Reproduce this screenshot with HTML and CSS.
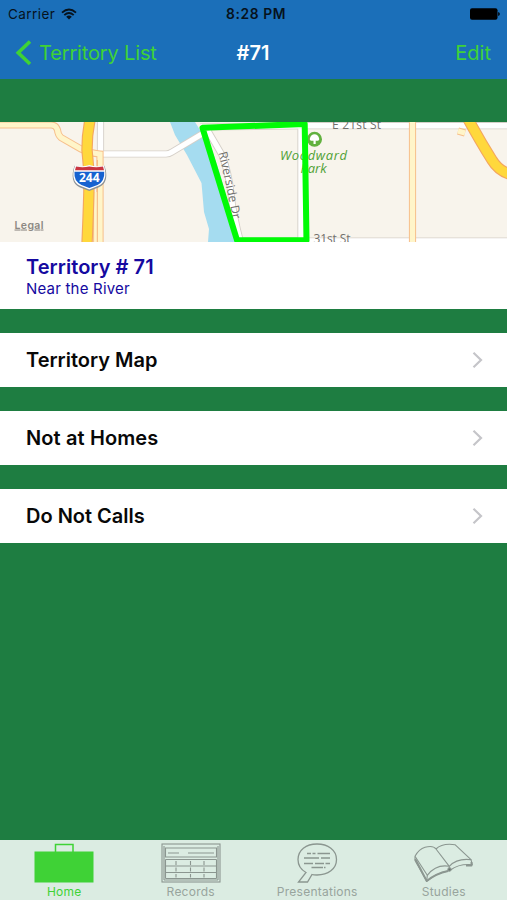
FILE: index.html
```html
<!DOCTYPE html>
<html lang="en">
<head>
    <meta charset="UTF-8">
    <meta name="viewport" content="width=device-width, initial-scale=1.0">
    <title>#71</title>
    <link rel="stylesheet" href="styles.css">
</head>
<body>
    <div class="screen">
        <header class="top">
            <div class="status-bar">
                <div class="carrier">
                    <span>Carrier</span>
                    <svg class="wifi" width="16" height="12" viewBox="0 0 16 12">
                        <path d="M1 4.6Q8 -1.6 15 4.6M3.3 7.1Q8 3.1 12.7 7.1" fill="none" stroke="#06121d" stroke-width="1.9"/>
                        <path d="M5.2 8.7Q8 6.4 10.8 8.7L8 11.6Z" fill="#06121d"/>
                    </svg>
                </div>
                <div class="time">8:28 PM</div>
                <div class="battery">
                    <svg width="30" height="12" viewBox="0 0 30 12">
                        <rect x="0" y="0.3" width="27.5" height="11.4" rx="2" fill="#000"/>
                        <path d="M28.2 4Q29.8 4.4 29.8 6T28.2 8Z" fill="#000"/>
                    </svg>
                </div>
            </div>
            <nav class="nav-bar">
                <a class="back">
                    <svg width="16" height="26" viewBox="0 0 16 26">
                        <path d="M15 1.5L3.2 12.700L15 24" fill="none" stroke="#3fd236" stroke-width="3.6"/>
                    </svg>
                    <span>Territory List</span>
                </a>
                <h1>#71</h1>
                <a class="edit">Edit</a>
            </nav>
        </header>

        <main>
            <svg class="map" width="507" height="120" viewBox="0 0 507 120">
                <rect width="507" height="120" fill="#f8f4ec"/>
                <!-- river -->
                <path d="M170 0L175 13L187 33L201.5 61L204 90L209 107L208 120H238L230 92L221 55L212 28L200 8L195 0Z" fill="#a5dcf0"/>
                <!-- white streets -->
                <g fill="none" stroke="#d5cfc8" stroke-width="7.2" stroke-linejoin="round">
                    <path d="M100.5 -2V32H166Q169 32 172 30L202 12"/>
                    <path d="M208 9L222 33Q229 52 231 72T241 122"/>
                    <path d="M200 5L305 3.7H507M240 119H507M301 3V119"/>
                </g>
                <g fill="none" stroke="#fff" stroke-width="5.4" stroke-linejoin="round">
                    <path d="M100.5 -2V32H166Q169 32 172 30L202 12"/>
                    <path d="M208 9L222 33Q229 52 231 72T241 122"/>
                    <path d="M200 5L305 3.7H507M240 119H507M301 3V119"/>
                </g>
                <!-- main roads -->
                <g fill="none" stroke="#f7bf8b" stroke-width="7.2">
                    <path d="M-2 3H51Q56 3 57.5 8Q58 13 61 15.5L81 27Q89 31 100 32V122M96.7 70V122"/>
                    <path d="M412.500 -2V122M458 9L465 11"/>
                </g>
                <g fill="none" stroke="#fff5c9" stroke-width="5.2">
                    <path d="M-2 3H51Q56 3 57.5 8Q58 13 61 15.5L81 27Q89 31 100 32V122M96.7 70V122"/>
                    <path d="M412.5 -2V122M458 9L465 11"/>
                </g>
                <path d="M97.3 38V122" stroke="#f4b37e" stroke-width="1"/>
                <!-- highways -->
                <g fill="none" stroke="#f3a660" stroke-width="11.4">
                    <path d="M90 -2Q87 12 87 28Q89 45 89 60T87 122"/>
                    <path d="M467.5 -4Q480 19 492 38Q498 48 509 52"/>
                </g>
                <g fill="none" stroke="#ffd83c" stroke-width="9.2">
                    <path d="M90 -2Q87 12 87 28Q89 45 89 60T87 122"/>
                    <path d="M467.5 -4Q480 19 492 38Q498 48 509 52"/>
                </g>
                <!-- interstate shield -->
                <path d="M74.5 43.7Q82 46 89.3 43.3Q97 46 104.5 43.7Q110 60 99 65.2L89.3 69L79.5 65.2Q69 60 74.5 43.7Z" fill="#8d9297"/>
                <path d="M75 43.4Q82 45.500 89.3 43Q97 45.5 104 43.4Q108.500 59 98.5 63.8L89.3 67.4L80 63.8Q70 59 75 43.4Z" fill="#fff"/>
                <path d="M76 44.6Q83 46 89.3 44.5Q96 46 103 44.6L104 48.3H75Z" fill="#c93440"/>
                <path d="M74.500 49.700H104.200Q105 59 97.500 63L89.3 66L81.500 63Q73.500 59 74.500 49.700Z" fill="#1762d0"/>
                <text class="shield-text" x="89.3" y="60" text-anchor="middle" textLength="20.5">244</text>
                <!-- labels -->
                <g class="street">
                    <text x="332" y="7" textLength="49">E 21st St</text>
                    <text x="313.5" y="121" textLength="37">31st St</text>
                    <path id="riverside" d="M218.5 31Q226 61 234 104" fill="none"/>
                    <text><textPath href="#riverside" textLength="68">Riverside Dr</textPath></text>
                </g>
                <circle cx="314.5" cy="17.3" r="7.5" fill="#62b13f"/>
                <path d="M313.500 22V18.8H311Q309 18 310.2 15.5Q311 12.5 314.5 12.3Q318 12.5 318.8 15.5Q320 18 318 18.8H315.7V22Z" fill="#fff"/>
                <g class="park">
                    <text x="280" y="38.3" textLength="67">Woodward</text>
                    <text x="300.5" y="51.3" textLength="26">Park</text>
                </g>
                <text class="legal" x="14.5" y="106.500" textLength="29">Legal</text>
                <!-- territory border -->
                <path d="M202.5 5.8L304.7 2L306.5 118.200H237Z" fill="none" stroke="#00fb06" stroke-width="6" stroke-linejoin="round"/>
            </svg>

            <section class="info">
                <h2>Territory # 71</h2>
                <p>Near the River</p>
            </section>

            <a class="row">
                <span>Territory Map</span>
                <svg width="11" height="18" viewBox="0 0 11 18"><path d="M1.5 1.8L9 9L1.5 16.2"/></svg>
            </a>
            <a class="row homes">
                <span>Not at Homes</span>
                <svg width="11" height="18" viewBox="0 0 11 18"><path d="M1.5 1.8L9 9L1.5 16.2"/></svg>
            </a>
            <a class="row">
                <span>Do Not Calls</span>
                <svg width="11" height="18" viewBox="0 0 11 18"><path d="M1.5 1.8L9 9L1.5 16.2"/></svg>
            </a>
        </main>

        <footer class="tab-bar">
            <a class="tab active">
                <svg width="60" height="40" viewBox="0 0 60 40">
                    <rect x="0.5" y="8.5" width="59" height="31" fill="#3fd236"/>
                    <path d="M21.5 9V1.5H39V9" fill="none" stroke="#3fd236" stroke-width="1.5"/>
                </svg>
                <span>Home</span>
            </a>
            <a class="tab">
                <svg width="60" height="40" viewBox="0 0 60 40" fill="none" stroke="#8b9690" stroke-width="1.1">
                    <rect x="1" y="1" width="58" height="38"/>
                    <path d="M3 3V37M57 3V37M4.5 5H55.5V14H4.5ZM7 10H18M27 10H53"/>
                    <path d="M4.5 16.5H55.5M4.5 23H55.5M4.5 29.500H55.5M4.5 35.500H55.5M3 37H57M4.5 16.5V35.5M55.5 16.5V35.5"/>
                    <path d="M15 18V22M29.5 18V22M43 18V22M15 24.5V28.5M29.5 24.5V28.5M43 24.5V28.5M15 31V34.5M29.5 31V34.5M43 31V34.5"/>
                </svg>
                <span>Records</span>
            </a>
            <a class="tab">
                <svg width="60" height="40" viewBox="0 0 60 40" fill="none" stroke="#8b9690" stroke-width="1.3">
                    <path d="M19 29.5Q11 25 11 16.5C11 7 19 1 30 1S49.5 7 49.5 16.5S41 32 30 32Q26.5 32 25 31.5L20.5 39H11.5L19 29.5Z"/>
                    <path d="M20 10.5H24M25.5 10.5H28.5M30.5 10.5H43M17 15H32M34 15H43M17 20.5H26M28 20.5H37M38.5 20.5H43M24.5 24.5H36M37 24.5H38.5"/>
                </svg>
                <span>Presentations</span>
            </a>
            <a class="tab">
                <svg width="60" height="40" viewBox="0 0 60 40" fill="none" stroke="#8b9690" stroke-width="1.1" stroke-linejoin="round">
                    <path d="M1 13.3Q5 6 11 4.3Q19 2 22 6L35.3 23.3Q22 21 13.3 32.3L1 13.3"/>
                    <path d="M22 6Q28 0 41 1.7L57 16.7Q43 15 35.3 23.3"/>
                    <path d="M1 13.3V17.5L12.7 38.3Q22 30 35.3 27.7V23.3M13.3 32.3L12.7 38.3M57 16.7L58.3 21.7Q45 20.5 36.5 27"/>
                    <path d="M1.3 16L12.7 38Q22 30.5 34 28M57.500 19V22.500L52 22.5" stroke-width="1.9"/>
                    <circle cx="35.5" cy="26.5" r="1.600" fill="#69746e"/>
                </svg>
                <span>Studies</span>
            </a>
        </footer>
    </div>
</body>
</html>
```
FILE: styles.css
```css
body {
    margin: 0;
    font-family: Inter, Roboto, sans-serif;
    background-color: #1e7d41;
}
h1, h2, p {
    margin: 0;
}
.screen {
    display: flex;
    flex-direction: column;
    width: 507px;
    height: 900px;
    overflow: hidden;
    background-color: #1e7d41;
}
.top {
    height: 79px;
    background-color: #1b6fb9;
}
.status-bar {
    display: grid;
    grid-template-columns: 1fr auto 1fr;
    align-items: center;
    height: 27px;
    padding: 0 7px 0 8px;
    font-size: 13.5px;
    letter-spacing: 0.45px;
    color: #06121d;
}
.carrier {
    display: flex;
    align-items: center;
    gap: 6px;
}
.time {
    padding-left: 4px;
    font-size: 13.8px;
    font-weight: 600;
    letter-spacing: 0.6px;
}
.battery {
    display: flex;
    justify-content: flex-end;
}
.nav-bar {
    display: grid;
    grid-template-columns: 1fr auto 1fr;
    align-items: center;
    height: 51px;
    padding: 0 16px 0 15px;
    font-size: 20px;
    color: #3fd236;
}
.back {
    display: flex;
    align-items: center;
    gap: 8px;
    letter-spacing: -0.15px;
}
.nav-bar h1 {
    font-size: 20px;
    font-weight: 600;
    color: #fff;
}
.edit {
    text-align: right;
}
main {
    flex: 1;
    padding-top: 43px;
}
.map {
    display: block;
}
.map text {
    font-family: "Open Sans", sans-serif;
}
.map .street {
    font-size: 12px;
    fill: #72706c;
}
.map .park {
    font-size: 13px;
    font-style: italic;
    font-weight: 500;
    fill: #50a135;
}
.map .shield-text {
    font-size: 12px;
    font-weight: 700;
    fill: #fff;
}
.map .legal {
    font-family: Inter, sans-serif;
    font-size: 10.5px;
    font-weight: 600;
    fill: #8d8983;
    text-decoration: underline;
}
.info {
    box-sizing: border-box;
    height: 67px;
    padding: 13px 26px 0;
    margin-bottom: 24px;
    background-color: #fff;
    color: #1509a0;
}
.info h2 {
    font-size: 20px;
    line-height: 24px;
    font-weight: 600;
    letter-spacing: 0.05px;
}
.info p {
    font-size: 15px;
    line-height: 19px;
    letter-spacing: 0.2px;
}
.row {
    display: flex;
    justify-content: space-between;
    align-items: center;
    height: 54px;
    padding: 0 24px 0 26px;
    margin-bottom: 24px;
    background-color: #fff;
    font-size: 20px;
    font-weight: 600;
    color: #080808;
}
.row.homes {
    letter-spacing: 0.12px;
}
.row path {
    fill: none;
    stroke: #c5c5c9;
    stroke-width: 2.2;
}
.tab-bar {
    display: grid;
    grid-template-columns: repeat(4, 1fr);
    box-sizing: border-box;
    height: 60px;
    padding: 3px 0 0 1px;
    background-color: #dbece2;
}
.tab {
    display: flex;
    flex-direction: column;
    align-items: center;
    font-size: 12px;
    line-height: 17px;
    letter-spacing: 0.25px;
    color: #98a49d;
}
.tab.active {
    color: #3fd236;
}
```
